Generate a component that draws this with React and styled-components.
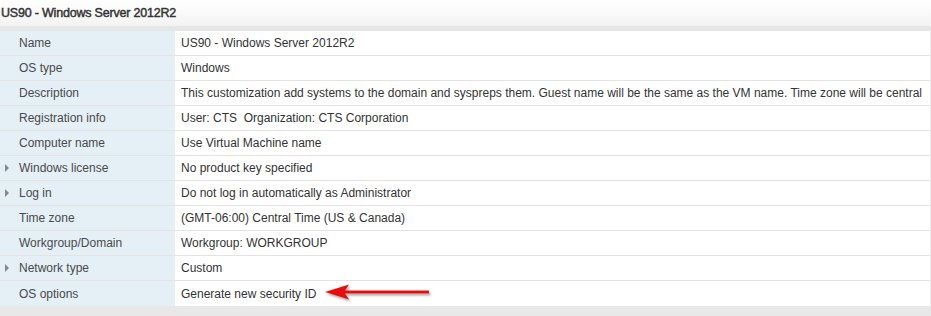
import React from "react";
import styled, { createGlobalStyle } from "styled-components";

const rows = [
  { label: "Name", value: "US90 - Windows Server 2012R2" },
  { label: "OS type", value: "Windows" },
  {
    label: "Description",
    value:
      "This customization add systems to the domain and syspreps them. Guest name will be the same as the VM name. Time zone will be central"
  },
  { label: "Registration info", value: "User: CTS\u00a0\u00a0Organization: CTS Corporation" },
  { label: "Computer name", value: "Use Virtual Machine name" },
  { label: "Windows license", value: "No product key specified", expandable: true },
  { label: "Log in", value: "Do not log in automatically as Administrator", expandable: true },
  { label: "Time zone", value: "(GMT-06:00) Central Time (US & Canada)" },
  { label: "Workgroup/Domain", value: "Workgroup: WORKGROUP" },
  { label: "Network type", value: "Custom", expandable: true },
  { label: "OS options", value: "Generate new security ID", marked: true }
];

const GlobalStyle = createGlobalStyle`
  html, body {
    margin: 0;
    padding: 0;
    background: #e8e8e8;
    font-family: "Liberation Sans", Arial, sans-serif;
  }
`;

const SpecPanel = () => (
  <>
    <GlobalStyle />
    <Panel>
      <Header>US90 - Windows Server 2012R2</Header>
      <Band />
      <Table>
        {rows.map((row) => (
          <Row key={row.label}>
            <Label>
              <Toggle>{row.expandable ? <Caret /> : null}</Toggle>
              {row.label}
            </Label>
            <Value>
              {row.value}
              {row.marked && <Pointer />}
            </Value>
          </Row>
        ))}
      </Table>
    </Panel>
  </>
);

// red callout arrow pointing left, with a soft shadow
const Pointer = () => (
  <PointerSvg width="112" height="22" viewBox="0 0 112 22">
    <defs>
      <filter id="shade" x="-10%" y="-40%" width="130%" height="200%">
        <feDropShadow dx="1.5" dy="2" stdDeviation="1.2" floodColor="#000" floodOpacity="0.35" />
      </filter>
    </defs>
    <g filter="url(#shade)">
      <polygon points="2,9 26,1.5 22,7.5 106,7.5 106,10.5 22,10.5 26,16.5" fill="#e8100f" />
    </g>
  </PointerSvg>
);

const Panel = styled.div`
  width: 931px;
  height: 316px;
  display: flex;
  flex-direction: column;
  background: #e8e8e8;
  overflow: hidden;
`;

const Header = styled.div`
  height: 26px;
  display: flex;
  align-items: center;
  padding-left: 1px;
  font-size: 12.5px;
  -webkit-text-stroke: 0.45px #333;
  letter-spacing: -0.2px;
  color: #333;
  background: linear-gradient(#ffffff, #f3f3f3);
`;

const Band = styled.div`
  height: 5px;
  background: #e6e6e6;
`;

const Table = styled.div`
  display: flex;
  flex-direction: column;
  background: #fff;
  border-right: 1px solid #ececec;
`;

const Row = styled.div`
  display: grid;
  grid-template-columns: 175px 1fr;
  height: 25px;
  border-bottom: 1px solid #e3e3e3;
  box-sizing: border-box;
  &:last-child {
    border-bottom: none;
  }
`;

const Label = styled.div`
  display: flex;
  align-items: center;
  background: #e5eff6;
  font-size: 12px;
  color: #4a4a4a;
  white-space: nowrap;
`;

const Toggle = styled.span`
  width: 19px;
  display: flex;
  justify-content: center;
  padding-left: 1px;
  box-sizing: border-box;
`;

const Caret = styled.span`
  width: 0;
  height: 0;
  border-top: 4px solid transparent;
  border-bottom: 4px solid transparent;
  border-left: 4px solid #888;
  margin-left: -7px;
`;

const Value = styled.div`
  display: flex;
  align-items: center;
  padding-left: 6px;
  font-size: 12px;
  color: #333;
  white-space: nowrap;
`;

const PointerSvg = styled.svg`
  margin-left: 7px;
  flex: none;
`;

export default SpecPanel;
